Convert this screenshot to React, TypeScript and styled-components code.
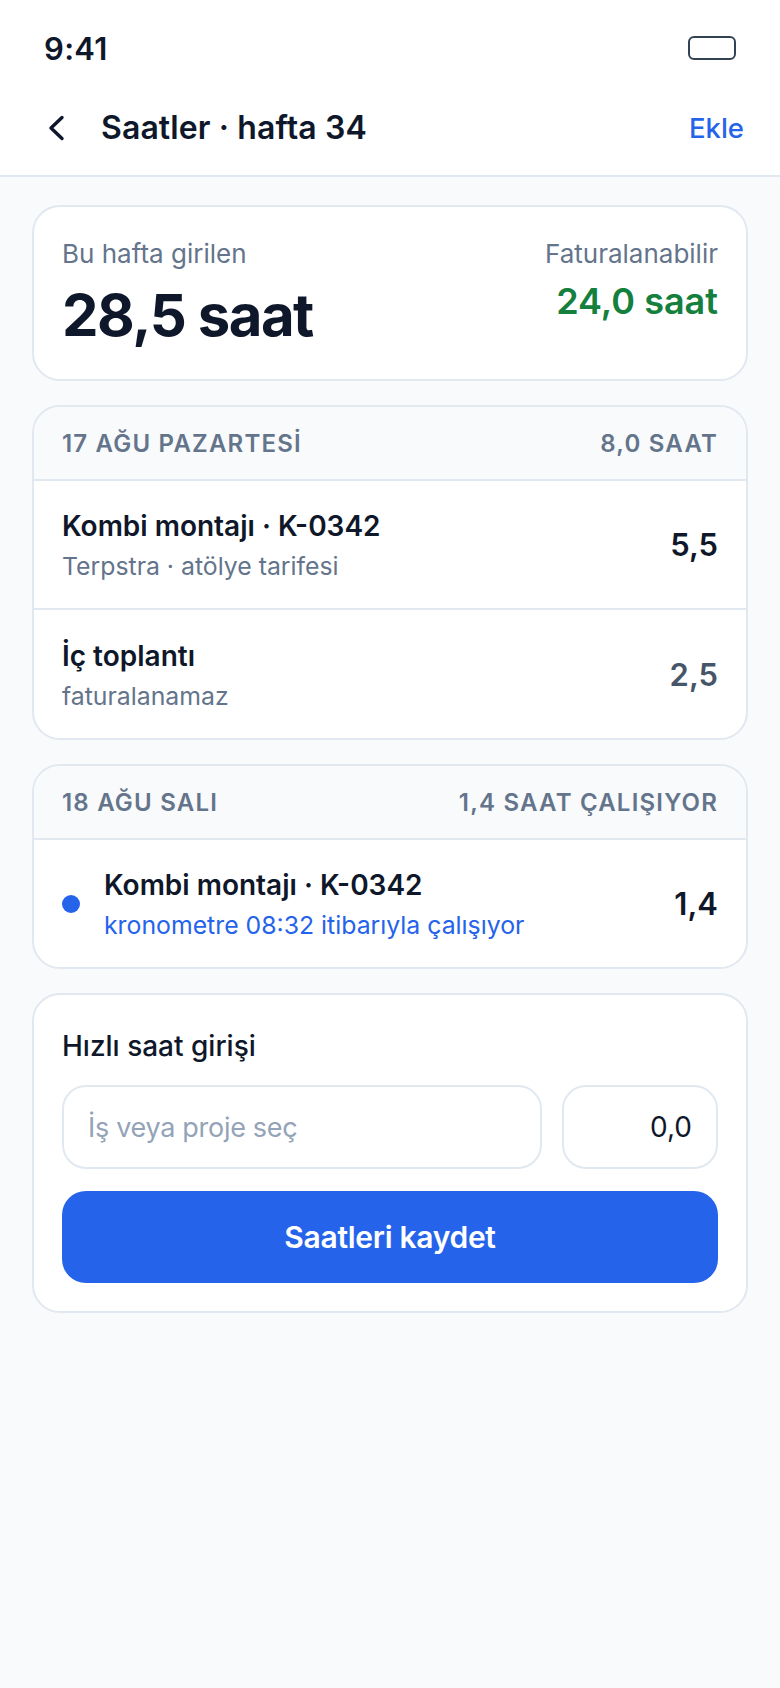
import React from 'react';
import styled, { createGlobalStyle } from 'styled-components';

const GlobalStyle = createGlobalStyle`
  * { box-sizing: border-box; }
  html, body { margin: 0; padding: 0; background: #f8fafc; }
  body { font-family: "Inter", "Noto Sans", sans-serif; color: #0f172a; }
`;

const Page = styled.div`
  width: 780px;
  min-height: 1688px;
  background: #f8fafc;
`;

const TopArea = styled.header`
  background: #ffffff;
  border-bottom: 2px solid #e2e8f0;
`;

const StatusBar = styled.div`
  height: 80px;
  padding: 16px 44px 0;
  display: flex;
  align-items: center;
  justify-content: space-between;
`;

const Clock = styled.span`
  font-size: 31px;
  font-weight: 600;
  letter-spacing: 0.3px;
`;

const Battery = styled.div`
  width: 48px;
  height: 24px;
  border: 2px solid #334155;
  border-radius: 6px;
`;

const NavBar = styled.div`
  height: 95px;
  padding: 0 36px 0 44px;
  display: flex;
  align-items: center;
  justify-content: space-between;
`;

const NavLeft = styled.div`
  display: flex;
  align-items: center;
  gap: 33px;
`;

const NavTitle = styled.h1`
  margin: 0;
  font-size: 32px;
  font-weight: 600;
  letter-spacing: 0.1px;
`;

const NavAction = styled.span`
  color: #2563eb;
  font-size: 27.5px;
  font-weight: 500;
`;

const Content = styled.main`
  padding: 28px 32px;
  display: flex;
  flex-direction: column;
  gap: 24px;
`;

const Card = styled.section`
  background: #ffffff;
  border: 2px solid #e2e8f0;
  border-radius: 28px;
  overflow: hidden;
`;

const SummaryBody = styled.div`
  height: 172px;
  padding: 30px 28px 0;
  display: flex;
  justify-content: space-between;
`;

const SummaryRight = styled.div`
  text-align: right;
`;

const SummaryLabel = styled.div`
  color: #64748b;
  font-size: 26px;
  line-height: 34px;
`;

const BigValue = styled.div`
  font-size: 58px;
  font-weight: 700;
  letter-spacing: -0.025em;
  line-height: 76px;
  margin-top: 6px;
`;

const BillableValue = styled.div`
  color: #15803d;
  font-size: 36px;
  font-weight: 600;
  line-height: 46px;
  margin-top: 7px;
`;

const DayHeader = styled.div`
  height: 74px;
  padding: 0 28px;
  background: #f8fafc;
  border-bottom: 2px solid #e2e8f0;
  display: flex;
  align-items: center;
  justify-content: space-between;
  color: #64748b;
  font-size: 24px;
  font-weight: 600;
  letter-spacing: 1.2px;
`;

const Row = styled.div<{ $height: number; $divider?: boolean }>`
  height: ${p => p.$height}px;
  padding: 0 28px;
  display: flex;
  align-items: center;
  gap: 24px;
  border-bottom: ${p => (p.$divider ? '2px solid #e2e8f0' : 'none')};
`;

const LiveDot = styled.span`
  width: 18px;
  height: 18px;
  border-radius: 50%;
  background: #2563eb;
  flex: none;
`;

const RowText = styled.div`
  flex: 1;
  padding-top: 1px;
`;

const RowTitle = styled.div`
  font-size: 28px;
  font-weight: 600;
  line-height: 38px;
`;

const RowSub = styled.div<{ $live?: boolean }>`
  color: ${p => (p.$live ? '#2563eb' : '#64748b')};
  font-size: 24.8px;
  line-height: 34px;
  margin-top: 4px;
`;

const Hours = styled.div<{ $muted?: boolean }>`
  color: ${p => (p.$muted ? '#475569' : '#0f172a')};
  font-size: 31px;
  font-weight: 600;
`;

const EntryBody = styled.div`
  padding: 31px 28px 28px;
`;

const EntryTitle = styled.h2`
  margin: 0 0 19px;
  font-size: 28px;
  font-weight: 500;
  line-height: 40px;
`;

const FieldRow = styled.div`
  display: grid;
  grid-template-columns: 1fr 156px;
  gap: 20px;
`;

const Field = styled.input<{ $numeric?: boolean }>`
  width: 100%;
  height: 84px;
  padding: 0 24px;
  background: #ffffff;
  border: 2px solid #e2e8f0;
  border-radius: 24px;
  font-family: inherit;
  font-size: ${p => (p.$numeric ? 28 : 27)}px;
  letter-spacing: ${p => (p.$numeric ? 0 : -0.3)}px;
  color: #0f172a;
  text-align: ${p => (p.$numeric ? 'right' : 'left')};
  outline: none;

  &::placeholder {
    color: #94a3b8;
    opacity: 1;
  }
`;

const SaveButton = styled.button`
  display: block;
  width: 100%;
  height: 92px;
  margin-top: 22px;
  border: none;
  border-radius: 24px;
  background: #2563eb;
  color: #ffffff;
  font-family: inherit;
  font-size: 30px;
  font-weight: 600;
  letter-spacing: -0.3px;
`;

const App: React.FC = () => {
  return (
    <Page>
      <GlobalStyle />
      <TopArea>
        <StatusBar>
          <Clock>9:41</Clock>
          <Battery />
        </StatusBar>
        <NavBar>
          <NavLeft>
            <svg width="24" height="28" viewBox="0 0 24 28" fill="none" stroke="#0f172a" strokeWidth="3.4" strokeLinecap="round" strokeLinejoin="round">
              <path d="M18 3.5 L7 14 L18 24.5" />
            </svg>
            <NavTitle>Saatler · hafta 34</NavTitle>
          </NavLeft>
          <NavAction>Ekle</NavAction>
        </NavBar>
      </TopArea>
      <Content>
        <Card>
          <SummaryBody>
            <div>
              <SummaryLabel>Bu hafta girilen</SummaryLabel>
              <BigValue>28,5 saat</BigValue>
            </div>
            <SummaryRight>
              <SummaryLabel>Faturalanabilir</SummaryLabel>
              <BillableValue>24,0 saat</BillableValue>
            </SummaryRight>
          </SummaryBody>
        </Card>

        <Card>
          <DayHeader>
            <span>17 AĞU PAZARTESİ</span>
            <span>8,0 SAAT</span>
          </DayHeader>
          <Row $height={129} $divider>
            <RowText>
              <RowTitle>Kombi montajı · K-0342</RowTitle>
              <RowSub>Terpstra · atölye tarifesi</RowSub>
            </RowText>
            <Hours>5,5</Hours>
          </Row>
          <Row $height={128}>
            <RowText>
              <RowTitle>İç toplantı</RowTitle>
              <RowSub>faturalanamaz</RowSub>
            </RowText>
            <Hours $muted>2,5</Hours>
          </Row>
        </Card>

        <Card>
          <DayHeader>
            <span>18 AĞU SALI</span>
            <span>1,4 SAAT ÇALIŞIYOR</span>
          </DayHeader>
          <Row $height={127}>
            <LiveDot />
            <RowText>
              <RowTitle>Kombi montajı · K-0342</RowTitle>
              <RowSub $live>kronometre 08:32 itibarıyla çalışıyor</RowSub>
            </RowText>
            <Hours>1,4</Hours>
          </Row>
        </Card>

        <Card>
          <EntryBody>
            <EntryTitle>Hızlı saat girişi</EntryTitle>
            <FieldRow>
              <Field placeholder="İş veya proje seç" readOnly />
              <Field $numeric value="0,0" readOnly />
            </FieldRow>
            <SaveButton>Saatleri kaydet</SaveButton>
          </EntryBody>
        </Card>
      </Content>
    </Page>
  );
};

export default App;
